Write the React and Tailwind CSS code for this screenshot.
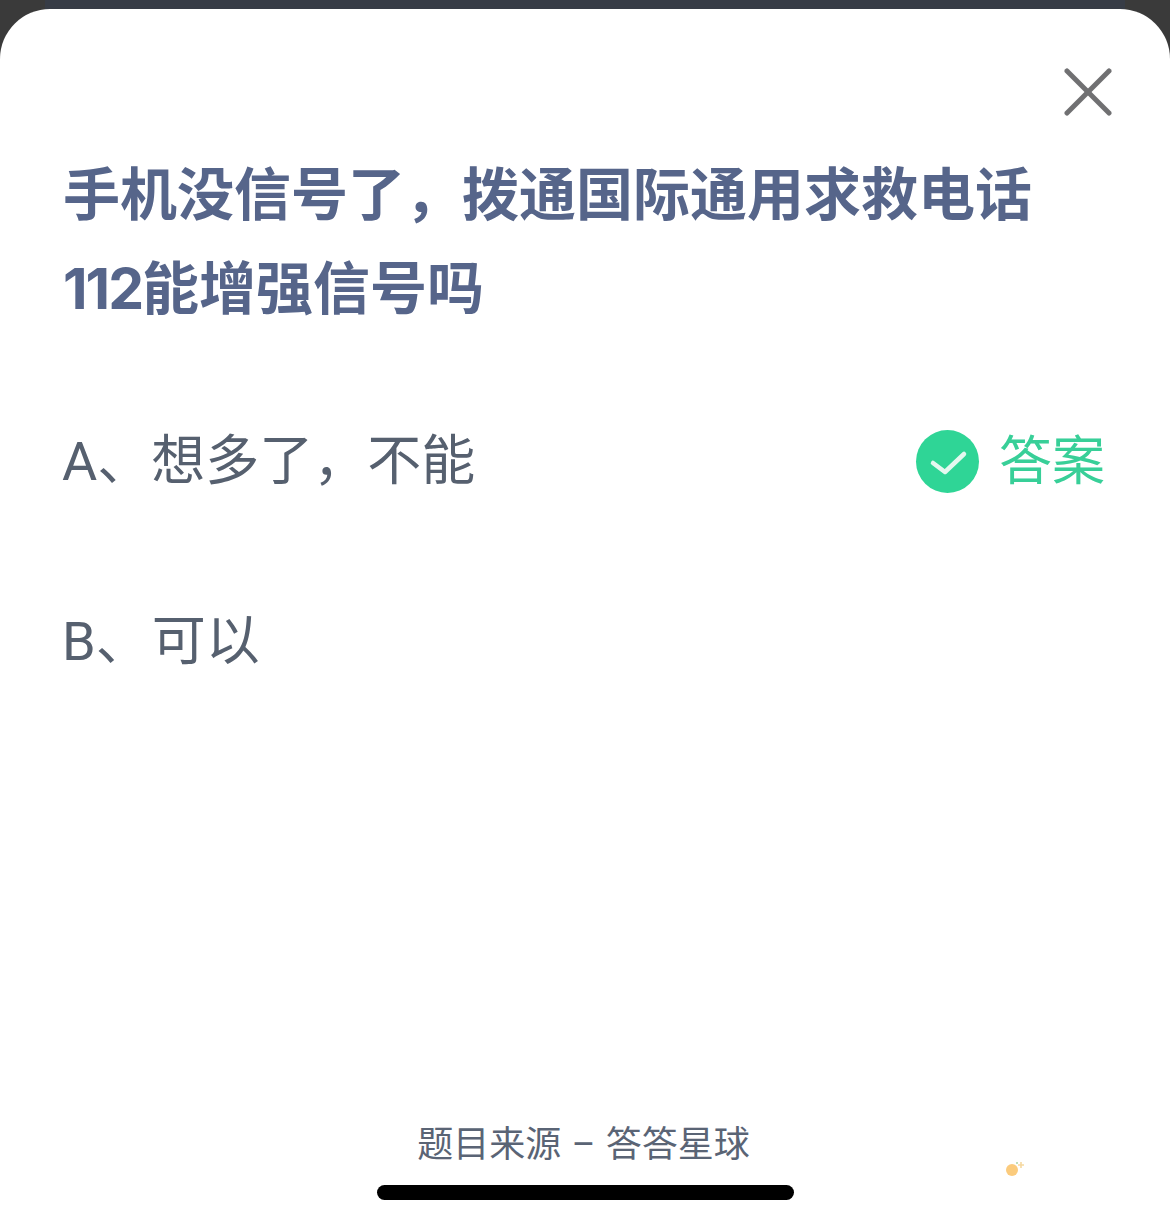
import React from 'react';

const cjk = 'font-["Roboto","Noto_Sans_CJK_SC",sans-serif]';

const CloseIcon = () => (
  <svg width="50" height="50" viewBox="0 0 50 50" fill="none" stroke="#707072" strokeWidth="5" strokeLinecap="round">
    <path d="M4 3 L46 45" />
    <path d="M46 3 L4 45" />
  </svg>
);

const AnswerBadge = () => (
  <div className="flex items-center gap-[20px]">
    <div className="mb-[1px] w-[63px] h-[63px] rounded-full bg-[#2fd596] flex items-center justify-center">
      <svg width="40" height="30" viewBox="0 0 40 30" fill="none" stroke="#e4f8ef" strokeWidth="4.5" strokeLinecap="round" strokeLinejoin="round">
        <path d="M5 16 L17 25 L36 7" />
      </svg>
    </div>
    <span className="text-[53px] leading-[64px] text-[#38cf98]">答案</span>
  </div>
);

const Sticker = () => (
  <svg width="22" height="18" viewBox="0 0 22 18" className="absolute left-[1004px] top-[1160px]">
    <circle cx="8" cy="10" r="6" fill="#fbcb7d" />
    <circle cx="13" cy="3" r="1" fill="#a9d6a8" />
    <path d="M17 2 V8 M14 5 H20" stroke="#f6d9a0" strokeWidth="1.6" />
  </svg>
);

export default function App() {
  return (
    <div className={`relative w-[1170px] h-[1224px] overflow-hidden bg-[#3a3a3a] ${cjk}`}>
      <div className="h-[9px] mx-[45px] bg-[#373c46]" />
      <div className="h-[1215px] bg-white rounded-t-[50px] flex flex-col">
        <div className="flex justify-end pt-[59px] pr-[57px]">
          <CloseIcon />
        </div>
        <h1 className="mt-[31px] pl-[63px] w-[1060px] text-[57px] leading-[93px] font-bold text-[#56658a]">
          手机没信号了，拨通国际通用求救电话
          <br />
          <span className='font-["Inter",sans-serif] tracking-[-2px]'>112</span>能增强信号吗
        </h1>
        <div className="mt-[94px] pl-[62px] pr-[65px] flex items-center justify-between h-[64px]">
          <span className="text-[54px] leading-[64px] text-[#56606f]">A、想多了，不能</span>
          <AnswerBadge />
        </div>
        <div className="mt-[116px] pl-[62px] h-[64px]">
          <span className="text-[54px] leading-[64px] text-[#56606f]">
            <span className="mr-[2px]">B、</span>可以
          </span>
        </div>
        <div className="mt-auto flex flex-col items-center">
          <p className="pr-[3px] text-[36px] leading-[44px] text-[#5a6475]">
            题目来源 <span className="mx-[1.5px]">–</span> 答答星球
          </p>
          <div className="mt-[18px] mb-[24px] w-[417px] h-[15px] rounded-full bg-black" />
        </div>
      </div>
      <Sticker />
    </div>
  );
}
